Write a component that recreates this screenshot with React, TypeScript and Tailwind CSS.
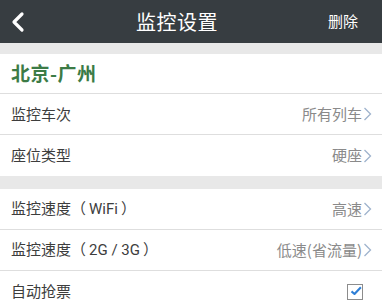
import React from "react";

const font = { fontFamily: '"Noto Sans CJK SC", "Noto Sans", sans-serif' };

function Chevron() {
  return (
    <svg width="9" height="16" viewBox="0 0 9 16" className="ml-[1px]">
      <path d="M1.5 2 L7.5 8 L1.5 14" fill="none" stroke="#9fb3cd" strokeWidth="1.3" />
    </svg>
  );
}

function Row({ label, value, last }: { label: React.ReactNode; value?: React.ReactNode; last?: boolean }) {
  return (
    <div className={`flex h-[41px] items-center justify-between pl-[11px] pr-[10px] bg-white ${last ? "" : "border-b border-[#dedede]"}`}>
      <span className="text-[15px] text-[#3d3d3d] whitespace-pre">{label}</span>
      {value}
    </div>
  );
}

function Value({ text }: { text: string }) {
  return (
    <span className="flex items-center text-[15px] text-[#8a8a8a]">
      {text}
      <Chevron />
    </span>
  );
}

export default function App() {
  return (
    <div className="relative w-[382px] h-[305px] overflow-hidden bg-[#e8e8e8]" style={font}>
      <div className="flex h-[43px] items-center justify-between bg-[#373d41] px-[10px]">
        <svg width="16" height="22" viewBox="0 0 16 22">
          <path d="M12 3 L4 11 L12 19" fill="none" stroke="#ffffff" strokeWidth="3.2" strokeLinecap="round" strokeLinejoin="round" />
        </svg>
        <span className="text-[20px] text-white tracking-[0.5px]">监控设置</span>
        <span className="text-[15px] text-white pr-[14px]">删除</span>
      </div>
      <div className="h-[11px]" />
      <div className="bg-white">
        <div className="flex h-[40px] items-center border-b border-[#dedede] pl-[11px]">
          <span className="text-[19px] font-semibold text-[#3c7b46] tracking-[0.5px]">北京-广州</span>
        </div>
        <Row label="监控车次" value={<Value text="所有列车" />} />
        <Row label="座位类型" value={<Value text="硬座" />} last />
      </div>
      <div className="h-[13px]" />
      <div className="bg-white">
        <Row
          label={
            <>
              监控速度（<span className="px-[3px]" style={{ fontFamily: "Roboto, sans-serif" }}>WiFi</span>）
            </>
          }
          value={<Value text="高速" />}
        />
        <Row
          label={
            <>
              监控速度（<span className="px-[3px]" style={{ fontFamily: "Roboto, sans-serif" }}>2G / 3G</span>）
            </>
          }
          value={<Value text="低速(省流量)" />}
        />
        <Row
          label="自动抢票"
          value={
            <span className="flex h-[16px] w-[16px] items-center justify-center border border-[#8c8c8c] bg-white mr-[9px]">
              <svg width="16" height="14" viewBox="0 0 16 14" className="-mt-[2px] ml-[2px]">
                <path d="M2 7.5 L6 11 L14.5 2" fill="none" stroke="#2f7fd6" strokeWidth="2.8" strokeLinejoin="round" />
              </svg>
            </span>
          }
          last
        />
      </div>
    </div>
  );
}
